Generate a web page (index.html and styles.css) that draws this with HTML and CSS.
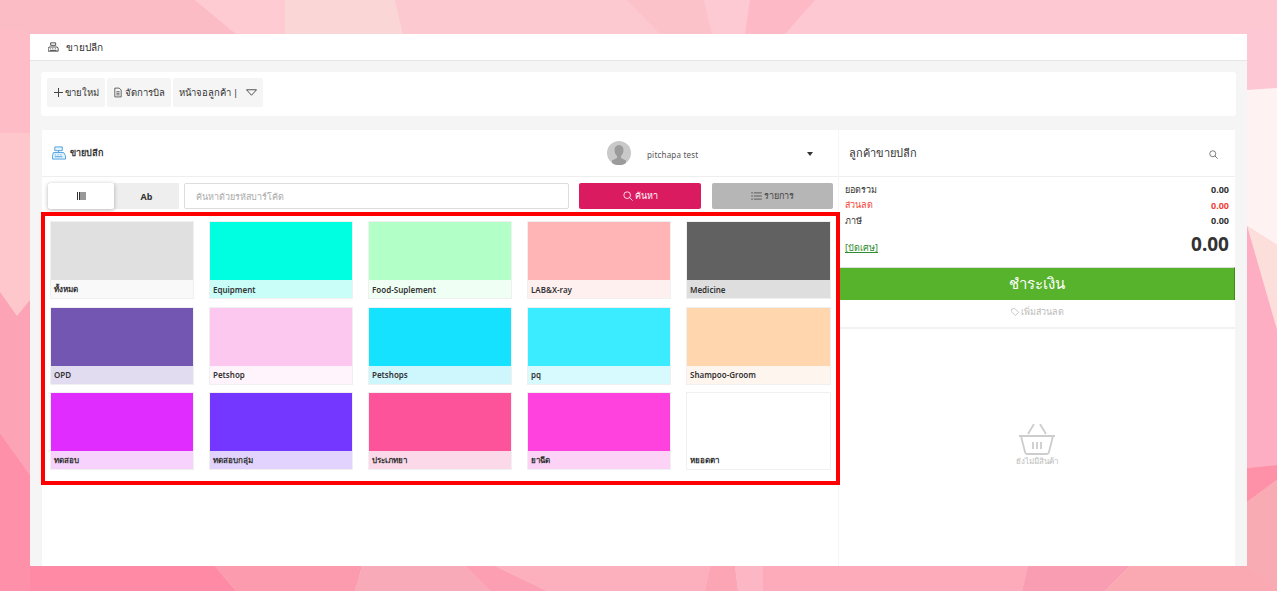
FILE: index.html
```html
<!DOCTYPE html>
<html lang="th">
<head>
<meta charset="utf-8">
<title>ขายปลีก</title>
<link rel="stylesheet" href="styles.css">
</head>
<body>
<svg class="bg" viewBox="0 0 1277 591" preserveAspectRatio="none" aria-hidden="true">
  <rect width="1277" height="591" fill="#fdc8d2"/>
  <polygon points="0,0 195,0 236,34 0,34" fill="#fcbcc6"/>
  <polygon points="195,0 285,0 285,34 236,34" fill="#fecbd3"/>
  <polygon points="285,0 395,0 403,34 285,34" fill="#fbd6d6"/>
  <polygon points="395,0 627,0 660,34 403,34" fill="#fdc9d0"/>
  <polygon points="627,0 704,0 712,34 660,34" fill="#fcc2ca"/>
  <polygon points="704,0 750,0 745,34 712,34" fill="#fdcad4"/>
  <polygon points="750,0 815,0 785,34 745,34" fill="#feb9c7"/>
  <polygon points="0,30 30,30 30,133 0,133" fill="#febcc6"/>
  <polygon points="0,133 30,133 30,300 17,316 0,292" fill="#fdc7cc"/>
  <polygon points="0,292 17,316 30,300 30,475 0,433" fill="#fca4b6"/>
  <polygon points="0,433 30,475 30,591 0,591" fill="#fe90a9"/>
  <polygon points="1247,30 1277,30 1277,88 1247,90" fill="#fdc7d3"/>
  <polygon points="1247,90 1277,88 1277,245 1247,226" fill="#fff2f3"/>
  <polygon points="1247,226 1277,245 1277,330" fill="#fcdedb"/>
  <polygon points="1247,226 1277,330 1277,465 1247,468" fill="#fdaec2"/>
  <polygon points="1247,468 1277,465 1277,480 1247,502" fill="#fe91a8"/>
  <polygon points="1247,502 1277,480 1277,591 1247,591" fill="#f9abb3"/>
  <polygon points="30,566 215,566 236,591 30,591" fill="#fe8aa5"/>
  <polygon points="215,566 362,566 355,591 236,591" fill="#fc9aae"/>
  <polygon points="362,566 465,566 490,591 355,591" fill="#f9aab8"/>
  <polygon points="465,566 495,566 547,591 490,591" fill="#fd9fb2"/>
  <polygon points="495,566 710,566 705,591 547,591" fill="#fcb0bd"/>
  <polygon points="710,566 735,566 738,591 705,591" fill="#fca5b5"/>
  <polygon points="735,566 763,566 763,591 738,591" fill="#fdb6c3"/>
  <polygon points="763,566 1028,566 1022,591 763,591" fill="#fdaabb"/>
  <polygon points="1028,566 1130,566 1105,591 1022,591" fill="#f99eb2"/>
  <polygon points="1130,566 1247,566 1277,591 1105,591" fill="#faa9b3"/>
</svg>
<div class="window">
  <header class="titlebar">
    <svg class="ico-title" viewBox="0 0 14 12"><path d="M3 1h6v3H3zM1 6h10l1 2v3H0V8zM2 8h1M5 8h1M8 8h1M2 10h8" fill="none" stroke="#333" stroke-width="1"/></svg>
    <span>ขายปลีก</span>
  </header>
  <div class="content">
    <nav class="toolbar">
      <button class="tool tool-new"><svg class="ico-plus" viewBox="0 0 9 9"><path d="M4.500 0v9M0 4.500h9" stroke="#444"/></svg>ขายใหม่</button>
      <button class="tool tool-bill"><svg class="ico-bill" viewBox="0 0 10 12"><path d="M1 .5h5.500L9 3v8.500H1zM3 5h4M3 7h4M3 9h4" fill="none" stroke="#444"/></svg>จัดการบิล</button>
      <button class="tool tool-screen">หน้าจอลูกค้า |<svg class="ico-caret" viewBox="0 0 12 7"><path d="M.5.500h11L6 6.500z" fill="none" stroke="#444"/></svg></button>
    </nav>
    <main class="panels">
      <section class="left">
        <div class="left-head">
          <div class="brand">
            <svg class="ico-pos" viewBox="0 0 15 14"><path d="M3 .5h8v4H3zM7 4.500v2M1.500 6.500h11l2 3.500v3.500H.5V10z" fill="#e3f2fd" stroke="#4a9fe0"/><path d="M3 9h1M6 9h1M9 9h1M3 11h8" stroke="#4a9fe0"/></svg>
            <b>ขายปลีก</b>
          </div>
          <div class="user">
            <svg class="avatar" viewBox="0 0 24 24"><circle cx="12" cy="12" r="12" fill="#c9c9c9"/><path d="M12 4c3 0 4.500 2.200 4.500 5s-1.300 5-2.500 6v2l5 2.500V22a12 12 0 0 1-14 0v-2.500L10 17v-2c-1.200-1-2.500-3.200-2.500-6S9 4 12 4z" fill="#9b9b9b"/></svg>
            <span class="uname">pitchapa test</span>
            <span class="udrop"></span>
          </div>
        </div>
        <div class="search-row">
          <div class="modes">
            <span class="mode active"><svg class="ico-bar" viewBox="0 0 9 8"><path d="M.5 0v8M2.500 0v8M4 0v8M6 0v8M8 0v8" stroke="#333"/></svg></span>
            <span class="mode">Ab</span>
          </div>
          <input class="search" placeholder="ค้นหาด้วยรหัสบาร์โค้ด">
          <button class="btn btn-pink"><svg class="ico-s" viewBox="0 0 12 12"><circle cx="5" cy="5" r="4" fill="none" stroke="#fff"/><path d="M8 8l3.500 3.500" stroke="#fff"/></svg>ค้นหา</button>
          <button class="btn btn-gray"><svg class="ico-list" viewBox="0 0 12 9"><path d="M0 1h2M3 1h9M0 4.500h2M3 4.500h9M0 8h2M3 8h9" stroke="#555"/></svg>รายการ</button>
        </div>
        <div class="grid">
          <div class="tile t1"><i></i><span>ทั้งหมด</span></div>
          <div class="tile t2"><i></i><span>Equipment</span></div>
          <div class="tile t3"><i></i><span>Food-Suplement</span></div>
          <div class="tile t4"><i></i><span>LAB&amp;X-ray</span></div>
          <div class="tile t5"><i></i><span>Medicine</span></div>
          <div class="tile t6"><i></i><span>OPD</span></div>
          <div class="tile t7"><i></i><span>Petshop</span></div>
          <div class="tile t8"><i></i><span>Petshops</span></div>
          <div class="tile t9"><i></i><span>pq</span></div>
          <div class="tile t10"><i></i><span>Shampoo-Groom</span></div>
          <div class="tile t11"><i></i><span>ทดสอบ</span></div>
          <div class="tile t12"><i></i><span>ทดสอบกลุ่ม</span></div>
          <div class="tile t13"><i></i><span>ประเภทยา</span></div>
          <div class="tile t14"><i></i><span>ยาฉีด</span></div>
          <div class="tile t15"><i></i><span>หยอดตา</span></div>
        </div>
      </section>
      <aside class="right">
        <div class="cust">
          <span>ลูกค้าขายปลีก</span>
          <svg class="ico-find" viewBox="0 0 12 12"><circle cx="5" cy="5" r="4" fill="none" stroke="#555"/><path d="M8 8l3.500 3.500" stroke="#555"/></svg>
        </div>
        <div class="totals">
          <div class="line"><span>ยอดรวม</span><b>0.00</b></div>
          <div class="line red"><span>ส่วนลด</span><b>0.00</b></div>
          <div class="line"><span>ภาษี</span><b>0.00</b></div>
          <div class="line grand"><a>[ปัดเศษ]</a><b>0.00</b></div>
        </div>
        <button class="pay">ชำระเงิน</button>
        <div class="discount"><svg class="ico-tag" viewBox="0 0 10 10"><path d="M.5 1.500l4-1 5 5-4 4-5-5z" fill="none" stroke="#bbb"/></svg>เพิ่มส่วนลด</div>
        <div class="empty">
          <svg class="ico-basket" viewBox="0 0 36 32"><path d="M9 10L15 0M27 10L21 0M0 12h36M2 12l4 16q.4 2 2 2h20q1.600 0 2-2l4-16M14 18v7M18 18v7M22 18v7" fill="none" stroke="#cdcdcd" stroke-width="1.800"/></svg>
          <span class="empty-text">ยังไม่มีสินค้า</span>
        </div>
      </aside>
    </main>
  </div>
</div>
</body>
</html>
```

FILE: styles.css
```css
* { box-sizing: border-box; }
html, body { margin: 0; height: 591px; overflow: hidden; }
body { font-family: "Noto Sans", "Liberation Sans", sans-serif; color: #333; padding: 34px 30px 25px; position: relative; }
.bg { position: absolute; left: 0; top: 0; width: 1277px; height: 591px; }
.window { position: relative; height: 532px; background: #f5f5f5; display: flex; flex-direction: column; overflow: hidden; }
.titlebar { height: 27px; flex: none; background: #fff; border-bottom: 1px solid #e6e6e6; display: flex; align-items: center; padding-left: 18px; font-size: 10px; gap: 6px; }
.ico-title { width: 12px; height: 10px; }
.content { flex: 1; padding: 11px 11px 0; display: flex; flex-direction: column; min-height: 0; }
.toolbar { height: 44px; flex: none; background: #fff; border-radius: 3px; padding: 6px; display: flex; gap: 2px; }
.tool { height: 29px; border: 0; background: #f5f5f5; border-radius: 2px; font: 9.5px "Noto Sans", sans-serif; color: #333; padding: 0; display: flex; align-items: center; justify-content: center; gap: 2px; flex: none; }
.tool-new { width: 58px; }
.tool-bill { width: 64px; }
.tool-screen { width: 90px; }
.ico-plus { width: 9px; height: 9px; }
.ico-bill { width: 8px; height: 11px; margin-right: 1px; }
.ico-caret { width: 11px; height: 7px; margin-left: 6px; }
.panels { margin: 14px 1px 0; flex: 1; display: flex; min-height: 0; gap: 1px; }
.left { width: 796px; flex: none; background: #fff; display: flex; flex-direction: column; }
.left-head { height: 47px; flex: none; border-bottom: 1px solid #eee; display: flex; align-items: center; justify-content: space-between; padding: 0 25px 0 10px; }
.brand { display: flex; align-items: center; gap: 4px; font-size: 9px; }
.ico-pos { width: 14px; height: 14px; }
.user { display: flex; align-items: center; }
.avatar { width: 24px; height: 24px; }
.uname { font-size: 8px; letter-spacing: .2px; margin: 3px 0 0 16px; width: 160px; color: #555; }
.udrop { width: 0; height: 0; margin-top: 2px; border: 3px solid transparent; border-top: 4px solid #333; border-bottom: 0; }
.search-row { height: 35px; flex: none; display: flex; align-items: flex-start; padding: 6px 5px 0 6px; }
.modes { display: flex; width: 131px; height: 26px; background: #eee; flex: none; }
.mode { flex: 1; display: flex; align-items: center; justify-content: center; font-size: 9px; font-weight: 700; }
.mode.active { background: #fff; border-radius: 2px; box-shadow: 0 1px 4px rgba(0,0,0,.3); width: 66px; flex: none; }
.ico-bar { width: 9px; height: 8px; }
.search { width: 385px; height: 26px; margin-left: 5px; border: 1px solid #ddd; border-radius: 2px; font: 9px "Noto Sans", sans-serif; padding: 0 11px; flex: none; }
.search::placeholder { color: #aaa; }
.btn { height: 26px; border: 0; border-radius: 2px; font: 9px "Noto Sans", sans-serif; display: flex; align-items: center; justify-content: center; gap: 2px; flex: none; }
.btn-pink { width: 122px; margin-left: 10px; background: #da1b60; color: #fff; }
.btn-gray { width: 121px; margin-left: 11px; background: #b6b6b6; color: #444; }
.ico-s { width: 10px; height: 10px; }
.ico-list { width: 11px; height: 8px; }
.grid { position: relative; width: 799px; height: 273px; margin-left: -1px; border: 4px solid #f00; padding: 6px 6px 0; display: grid; grid-template-columns: repeat(4, 142px) 143px; column-gap: 17px; grid-auto-rows: 76px; row-gap: 9.5px; flex: none; }
.tile { box-shadow: 0 0 0 1px #f0f0f0; display: flex; flex-direction: column; font-size: 8px; font-weight: 600; }
.tile i { display: block; height: 58px; flex: none; }
.tile span { flex: 1; padding: 0 3px; display: flex; align-items: center; color: #333; }
.t1 i { background: #e0e0e0; } .t1 span { background: #f9f9f9; }
.t2 i { background: #00ffe1; } .t2 span { background: #c8fdf8; }
.t3 i { background: #b2ffc8; } .t3 span { background: #effff3; }
.t4 i { background: #ffb4b6; } .t4 span { background: #fff0f0; }
.t5 i { background: #616161; } .t5 span { background: #dedede; }
.t6 i { background: #7355b2; } .t6 span { background: #e1dcf0; }
.t7 i { background: #fdc8ef; } .t7 span { background: #fff4fb; }
.t8 i { background: #14e2ff; } .t8 span { background: #cdf6fd; }
.t9 i { background: #3bebff; } .t9 span { background: #d7fafe; }
.t10 i { background: #ffd6ad; } .t10 span { background: #fff5ef; }
.t11 i { background: #e12cff; } .t11 span { background: #f6d2fd; }
.t12 i { background: #7337ff; } .t12 span { background: #e1d3fd; }
.t13 i { background: #fc539b; } .t13 span { background: #fcd9e9; }
.t14 i { background: #ff42de; } .t14 span { background: #fcd3f7; }
.t15 i { background: #fff; } .t15 span { background: #fff; }
.right { flex: 1; background: #fff; display: flex; flex-direction: column; min-width: 0; }
.cust { height: 47px; flex: none; display: flex; align-items: center; justify-content: space-between; padding: 0 17px 0 10px; font-size: 11px; border-bottom: 1px solid #eee; }
.ico-find { width: 9px; height: 9px; margin-top: 3px; }
.totals { padding: 5px 6px 0 6px; height: 90px; flex: none; font-size: 9px; }
.line { display: flex; justify-content: space-between; align-items: center; height: 15.5px; }
.line b { font-weight: 700; font-size: 9px; }
.red { color: #f44336; }
.grand { height: 25px; margin-top: 3px; align-items: center; }
.grand a { color: #2e8b2e; font-size: 9px; margin-top: 8px; text-decoration: underline; }
.grand b { font-size: 19px; line-height: 24px; }
.pay { height: 33px; flex: none; border: 0; border-top: 1px solid #ddd; border-right: 1px solid #3d8a1a; background: #57b22c; color: #fff; font: 300 15px "Noto Sans", sans-serif; padding: 0; }
.discount { height: 29px; flex: none; border-bottom: 2px solid #f2f2f2; padding-bottom: 4px; display: flex; align-items: center; justify-content: center; gap: 2px; font-size: 9px; color: #bbb; }
.ico-tag { width: 8px; height: 8px; }
.empty { flex: 1; display: flex; flex-direction: column; align-items: center; padding-top: 95px; font-size: 8px; color: #bbb; }
.ico-basket { width: 36px; height: 32px; }
.empty-text { margin-top: -1px; }
```
